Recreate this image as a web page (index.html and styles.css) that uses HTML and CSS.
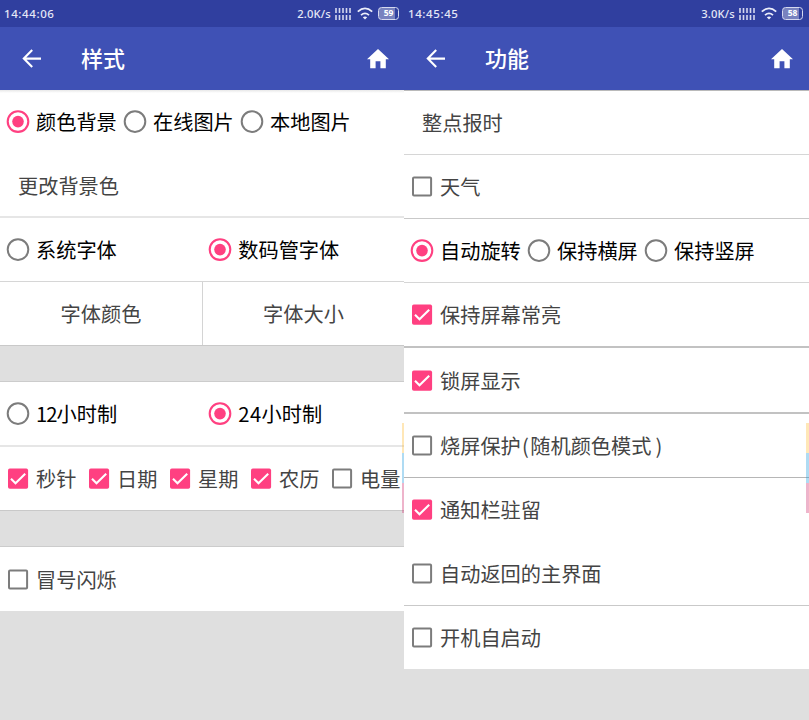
FILE: index.html
```
<!DOCTYPE html>
<html lang="zh-CN">
<head>
<meta charset="utf-8">
<title>时钟设置</title>
<link rel="stylesheet" href="styles.css">
</head>
<body>
<svg class="defs" aria-hidden="true">
  <symbol id="back" viewBox="0 0 20 20"><path d="M19 9.6H2M10.2 1.1 1.8 9.6l8.4 8.5" fill="none" stroke="#fff" stroke-width="2.1"/></symbol>
  <symbol id="home" viewBox="0 0 22 20"><path d="M11 0 22 10.2h-3.2V19.2h-5.4v-7H8.6v7H3.2v-9H0z" fill="#fff"/></symbol>
  <symbol id="signal" viewBox="0 0 16 14"><path d="M1 1v5M4.5 1v5M8 1v5M11.5 1v5M15 1v5M1 8v5M4.5 8v5M8 8v5M11.5 8v5M15 8v5" stroke="#d5d8ef" stroke-width="1.6"/></symbol>
  <symbol id="wifi" viewBox="0 0 16 13"><path d="M.8 4.6Q8-1.8 15.2 4.6M4 8.1Q8 4.6 12 8.1" fill="none" stroke="#eceefa" stroke-width="1.8"/><path d="M5.8 10.2Q8 8.7 10.2 10.2L8 12.5z" fill="#eceefa"/></symbol>
  <symbol id="radio" viewBox="0 0 24 24"><circle cx="12" cy="11.6" r="10.3" fill="none" stroke="#7c7c7c" stroke-width="2"/></symbol>
  <symbol id="radio-on" viewBox="0 0 24 24"><circle cx="12" cy="11.6" r="10.3" fill="none" stroke="#ff4081" stroke-width="2.1"/><circle cx="12" cy="11.6" r="5.8" fill="#ff4081"/></symbol>
  <symbol id="box" viewBox="0 0 24 24"><rect x="3" y="2.5" width="18.1" height="18.1" rx="1" fill="none" stroke="#7c7c7c" stroke-width="2"/></symbol>
  <symbol id="box-on" viewBox="0 0 24 24"><rect x="2" y="1.6" width="20.1" height="20.2" rx="1.8" fill="#ff4081"/><path d="m5 11.8 4.5 4.5L19.2 6.7" fill="none" stroke="#fff" stroke-width="2.1"/></symbol>
</svg>
<main class="screens">
  <section class="screen">
    <div class="status">
      <span class="time">14:44:06</span>
      <span class="speed">2.0K/s</span>
      <svg class="signal"><use href="#signal"/></svg>
      <svg class="wifi"><use href="#wifi"/></svg>
      <span class="battery">59</span>
    </div>
    <header class="bar">
      <svg class="back"><use href="#back"/></svg>
      <h1>样式</h1>
      <svg class="home"><use href="#home"/></svg>
    </header>
    <div class="row shade h63 radios">
      <label><svg><use href="#radio-on"/></svg>颜色背景</label>
      <label><svg><use href="#radio"/></svg>在线图片</label>
      <label><svg><use href="#radio"/></svg>本地图片</label>
    </div>
    <div class="row h65 line-thick plain low"><span>更改背景色</span></div>
    <div class="row h64 line halves">
      <label><svg><use href="#radio"/></svg>系统字体</label>
      <label><svg><use href="#radio-on"/></svg>数码管字体</label>
    </div>
    <div class="row h64 line-dark buttons"><span>字体颜色</span><span>字体大小</span></div>
    <div class="gap"></div>
    <div class="row h65 line-thick halves">
      <label><svg><use href="#radio"/></svg><span><span class="num">12</span>小时制</span></label>
      <label><svg><use href="#radio-on"/></svg><span><span class="num wide">24</span>小时制</span></label>
    </div>
    <div class="row h64 line-dark checks">
      <label><svg><use href="#box-on"/></svg>秒针</label>
      <label><svg><use href="#box-on"/></svg>日期</label>
      <label><svg><use href="#box-on"/></svg>星期</label>
      <label><svg><use href="#box-on"/></svg>农历</label>
      <label><svg><use href="#box"/></svg>电量</label>
    </div>
    <div class="gap"></div>
    <div class="row h64 checks low"><label><svg><use href="#box"/></svg>冒号闪烁</label></div>
    <div class="edge"><i></i><i></i><i></i></div>
  </section>
  <section class="screen">
    <div class="status">
      <span class="time">14:45:45</span>
      <span class="speed">3.0K/s</span>
      <svg class="signal"><use href="#signal"/></svg>
      <svg class="wifi"><use href="#wifi"/></svg>
      <span class="battery">58</span>
    </div>
    <header class="bar">
      <svg class="back"><use href="#back"/></svg>
      <h1>功能</h1>
      <svg class="home"><use href="#home"/></svg>
    </header>
    <div class="row h65 line top-line plain"><span>整点报时</span></div>
    <div class="row h64 line-dark checks"><label><svg><use href="#box"/></svg>天气</label></div>
    <div class="row h64 line radios">
      <label><svg><use href="#radio-on"/></svg>自动旋转</label>
      <label><svg><use href="#radio"/></svg>保持横屏</label>
      <label><svg><use href="#radio"/></svg>保持竖屏</label>
    </div>
    <div class="row h65 line-heavy checks"><label><svg><use href="#box-on"/></svg>保持屏幕常亮</label></div>
    <div class="row h66 line-heavy checks low"><label><svg><use href="#box-on"/></svg>锁屏显示</label></div>
    <div class="row h64 line-strong checks"><label><svg><use href="#box"/></svg><span>烧屏保护<span class="paren">(</span>随机颜色模式<span class="paren close">)</span></span></label></div>
    <div class="row h64 checks"><label><svg><use href="#box-on"/></svg>通知栏驻留</label></div>
    <div class="row h64 line-dark checks"><label><svg><use href="#box"/></svg>自动返回的主界面</label></div>
    <div class="row h63 checks"><label><svg><use href="#box"/></svg>开机自启动</label></div>
    <div class="edge"><i></i><i></i><i></i></div>
  </section>
</main>
</body>
</html>
```
FILE: styles.css
```
* { box-sizing: border-box; }
body { margin: 0; font-family: "Noto Sans CJK SC", sans-serif; font-size: 20.2px; color: #444; }
.defs { position: absolute; width: 0; height: 0; }
svg { display: block; flex: none; }
.screens { display: grid; grid-template-columns: 404px 405px; height: 720px; overflow: hidden; }
.screen { position: relative; background: #dfdfdf; overflow: hidden; }
.status { height: 27px; padding: 0 5px 0 4px; display: flex; align-items: center; background: #303f9f; color: #e6e8f6; font: 500 11.5px/27px "Noto Sans", sans-serif; }
.screen:last-child .status { padding-right: 6px; }
.time { margin-right: auto; letter-spacing: .6px; }
.speed { font-size: 11.2px; letter-spacing: .2px; }
.signal { width: 16px; height: 14px; margin-left: 4px; }
.wifi { width: 16px; height: 13px; margin-left: 6px; }
.battery { width: 21px; height: 13px; margin-left: 5px; border: 1.5px solid #d5d8ef; border-radius: 3.5px; background: linear-gradient(90deg, #7882bf 85%, #303f9f 0); font: 700 8.5px/10px "Noto Sans", sans-serif; text-align: center; color: #fff; }
.bar { height: 63px; padding: 0 15px 0 22px; display: flex; align-items: center; background: #3f51b5; }
.screen:last-child .bar { padding-right: 16px; }
.back { width: 20px; height: 20px; }
.bar h1 { margin: 0 auto 3px 39px; font-size: 22px; line-height: 30px; font-weight: 500; color: #fff; }
.home { width: 22px; height: 20px; }
.row { display: flex; align-items: center; background: #fff; line-height: 30px; white-space: nowrap; }
.row label { display: flex; flex: none; align-items: center; gap: 6px; }
.row label svg { width: 24px; height: 24px; }
.h63 { height: 63px; }
.h64 { height: 64px; }
.h65 { height: 65px; }
.h66 { height: 66px; }
.low { padding-top: 2px; }
.shade { background: linear-gradient(#e8e8e8, #fff 3px); }
.line { border-bottom: 1px solid #d6d6d6; }
.line-thick { border-bottom: 2px solid #e6e6e6; }
.line-dark { border-bottom: 1px solid #c9c9c9; }
.line-strong { border-bottom: 1px solid #b6b6b6; }
.line-heavy { border-bottom: 2px solid #c2c2c2; }
.top-line { border-top: 1px solid #bababa; }
.gap { height: 36px; border-bottom: 1px solid #ccc; }
.plain { padding-left: 18px; }
.radios, .halves { padding-left: 6px; color: #000; }
.radios label { width: 117px; }
.halves label { width: 202.3px; }
.num { letter-spacing: -.9px; }
.num.wide { letter-spacing: .4px; }
.paren { display: inline-block; width: 9.5px; text-align: center; }
.paren.close { width: 11px; text-align: right; }
.checks { padding-left: 6px; }
.checks label { min-width: 81px; }
.buttons { display: grid; grid-template-columns: 203px 1fr; text-align: center; }
.buttons span { line-height: 63px; }
.buttons span:first-child { border-right: 1px solid #d4d4d4; }
.edge { position: absolute; right: 0; top: 423px; width: 2px; opacity: .35; }
.screen:last-child .edge { width: 3px; }
.edge i { display: block; height: 30px; background: #fb3; }
.edge i:nth-child(2) { background: #1d9adf; }
.edge i:nth-child(3) { background: #cf2b6c; }
```
